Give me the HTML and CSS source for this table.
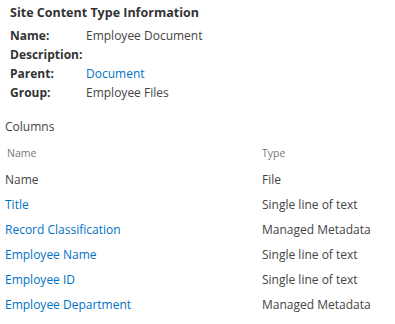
FILE: index.html
```html
<!DOCTYPE html>
<html lang="en">
<head>
  <meta charset="UTF-8" />
  <title>Site Content Type Information</title>
  <link rel="stylesheet" href="styles.css">
</head>
<body>
  <div class="info">
    <h2 class="info-titel">Site Content Type Information</h2>
    <div class="info-zeile">
      <span class="label">Name:</span>
      <span class="wert">Employee Document</span>
    </div>
    <div class="info-zeile">
      <span class="label">Description:</span>
      <span class="wert"></span>
    </div>
    <div class="info-zeile">
      <span class="label">Parent:</span>
      <a class="wert link" href="#">Document</a>
    </div>
    <div class="info-zeile">
      <span class="label">Group:</span>
      <span class="wert">Employee Files</span>
    </div>
  </div>

  <div class="spalten">
    <div class="spalten-titel">Columns</div>
    <div class="spalten-kopf">
      <span class="col-name">Name</span>
      <span class="col-typ">Type</span>
    </div>
    <div class="spalten-liste">
      <div class="spalten-zeile">
        <span class="col-name">Name</span>
        <span class="col-typ">File</span>
      </div>
      <div class="spalten-zeile">
        <a class="col-name link" href="#">Title</a>
        <span class="col-typ">Single line of text</span>
      </div>
      <div class="spalten-zeile">
        <a class="col-name link" href="#">Record Classification</a>
        <span class="col-typ">Managed Metadata</span>
      </div>
      <div class="spalten-zeile">
        <a class="col-name link" href="#">Employee Name</a>
        <span class="col-typ">Single line of text</span>
      </div>
      <div class="spalten-zeile">
        <a class="col-name link" href="#">Employee ID</a>
        <span class="col-typ">Single line of text</span>
      </div>
      <div class="spalten-zeile">
        <a class="col-name link" href="#">Employee Department</a>
        <span class="col-typ">Managed Metadata</span>
      </div>
    </div>
  </div>
</body>
</html>
```

FILE: styles.css
```css
* {
  box-sizing: border-box;
}

body {
  margin: 0;
  padding: 0;
  font-family: "Open Sans", "Noto Sans", sans-serif;
  font-size: 12px;
  color: #444;
  background: #fff;
}

.link {
  color: #0072c6;
  text-decoration: none;
}

.info {
  padding: 3px 0 0 10px;
}

.info-titel {
  margin: 0 0 3px 0;
  font-size: 12.5px;
  font-weight: bold;
  color: #333;
  line-height: 20px;
}

.info-zeile {
  display: flex;
  line-height: 19px;
}

.label {
  width: 76px;
  font-weight: bold;
  color: #333;
}

.spalten {
  padding: 15px 0 0 5px;
}

.spalten-titel {
  line-height: 20px;
  color: #444;
}

.spalten-kopf {
  display: flex;
  margin-top: 8px;
  padding-left: 2px;
  font-size: 10.5px;
  color: #777;
  line-height: 16px;
}

.spalten-kopf .col-name {
  width: 255px;
}

.spalten-liste {
  margin-top: 6px;
}

.spalten-zeile {
  display: flex;
  line-height: 25px;
}

.spalten-zeile .col-name {
  width: 257px;
}
```
